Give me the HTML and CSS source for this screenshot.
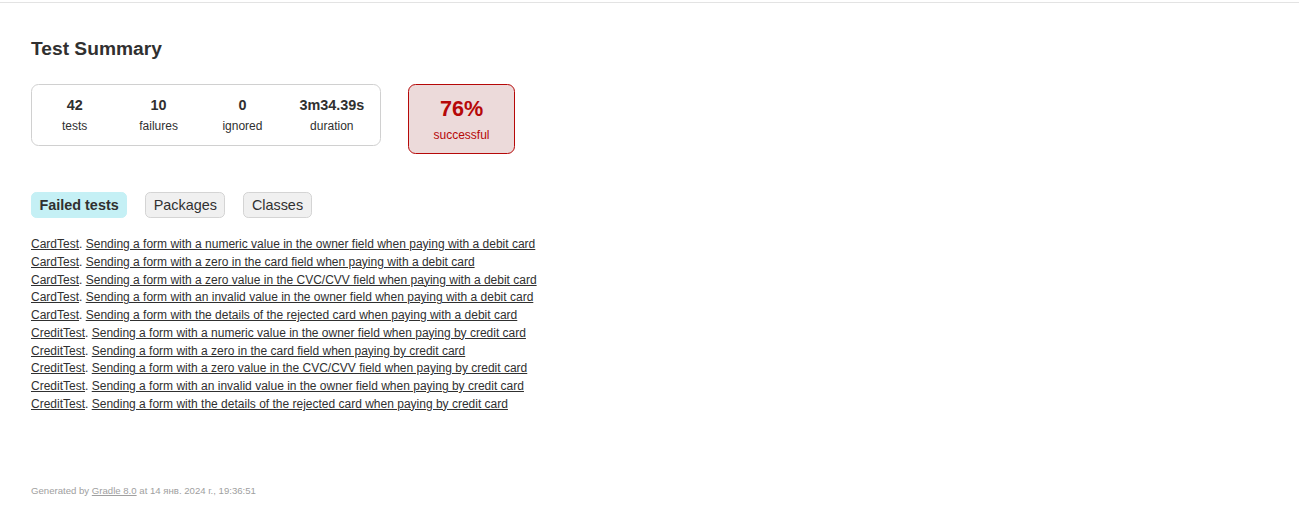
FILE: index.html
```html
<!DOCTYPE html>
<html>
<head>
<meta charset="utf-8">
<title>Test results - Test Summary</title>
<link rel="stylesheet" href="styles.css">
</head>
<body>
<div class="topline"></div>
<div class="content">
  <h1 class="title">Test Summary</h1>
  <div class="summary">
    <div class="summary-group">
      <div class="info-box">
        <div class="counter">42</div>
        <p class="label">tests</p>
      </div>
      <div class="info-box">
        <div class="counter">10</div>
        <p class="label">failures</p>
      </div>
      <div class="info-box">
        <div class="counter">0</div>
        <p class="label">ignored</p>
      </div>
      <div class="info-box info-duration">
        <div class="counter">3m34.39s</div>
        <p class="label">duration</p>
      </div>
    </div>
    <div class="success-rate">
      <div class="percent">76%</div>
      <p class="label">successful</p>
    </div>
  </div>
  <ul class="tab-links">
    <li class="tab selected"><a class="tab-link">Failed tests</a></li>
    <li class="tab"><a class="tab-link">Packages</a></li>
    <li class="tab"><a class="tab-link">Classes</a></li>
  </ul>
  <ul class="link-list">
    <li class="link-item"><a href="#">CardTest</a>. <a href="#">Sending a form with a numeric value in the owner field when paying with a debit card</a></li>
    <li class="link-item"><a href="#">CardTest</a>. <a href="#">Sending a form with a zero in the card field when paying with a debit card</a></li>
    <li class="link-item"><a href="#">CardTest</a>. <a href="#">Sending a form with a zero value in the CVC/CVV field when paying with a debit card</a></li>
    <li class="link-item"><a href="#">CardTest</a>. <a href="#">Sending a form with an invalid value in the owner field when paying with a debit card</a></li>
    <li class="link-item"><a href="#">CardTest</a>. <a href="#">Sending a form with the details of the rejected card when paying with a debit card</a></li>
    <li class="link-item"><a href="#">CreditTest</a>. <a href="#">Sending a form with a numeric value in the owner field when paying by credit card</a></li>
    <li class="link-item"><a href="#">CreditTest</a>. <a href="#">Sending a form with a zero in the card field when paying by credit card</a></li>
    <li class="link-item"><a href="#">CreditTest</a>. <a href="#">Sending a form with a zero value in the CVC/CVV field when paying by credit card</a></li>
    <li class="link-item"><a href="#">CreditTest</a>. <a href="#">Sending a form with an invalid value in the owner field when paying by credit card</a></li>
    <li class="link-item"><a href="#">CreditTest</a>. <a href="#">Sending a form with the details of the rejected card when paying by credit card</a></li>
  </ul>
  <div class="footer">
    <p class="footer-text">Generated by <a href="#">Gradle 8.0</a> at 14 янв. 2024 г., 19:36:51</p>
  </div>
</div>
</body>
</html>
```

FILE: styles.css
```css
html, body {
  margin: 0;
  padding: 0;
  background: #ffffff;
}

body {
  font-family: "Liberation Sans", Arial, sans-serif;
  font-size: 12px;
  color: #303030;
}

a, a:visited {
  color: #303030;
}

.topline {
  height: 2px;
  border-bottom: 1px solid #e3e3e3;
}

.content {
  padding: 0 31px;
}

.title {
  margin: 35px 0 0;
  font-size: 19.2px;
  line-height: 22px;
  font-weight: bold;
  color: #303030;
}

.summary {
  display: flex;
  align-items: flex-start;
  margin-top: 24px;
}

.summary-group {
  display: flex;
  width: 350px;
  height: 62px;
  box-sizing: border-box;
  border: 1.5px solid #d0d0d0;
  border-radius: 7.5px;
  padding: 0 0.75px;
}

.info-box {
  width: 84px;
  box-sizing: border-box;
  padding-top: 12px;
  text-align: center;
}

.info-box.info-duration {
  width: 95px;
}

.counter {
  font-size: 14.4px;
  line-height: 16px;
  font-weight: bold;
  margin-bottom: 6px;
}

.label {
  margin: 0;
  line-height: 14px;
}

.success-rate {
  width: 107px;
  height: 70px;
  box-sizing: border-box;
  margin-left: 27px;
  padding-top: 11px;
  border: 1.5px solid #b60808;
  border-radius: 7.5px;
  background: #ecdada;
  color: #b60808;
  text-align: center;
}

.percent {
  font-size: 21.6px;
  line-height: 25px;
  font-weight: bold;
  margin-bottom: 7px;
}

.tab-links {
  display: flex;
  list-style: none;
  margin: 38px 0 0;
  padding: 0;
}

.tab {
  padding: 3.75px 7.5px;
  margin-right: 18px;
  border: 0.75px solid #d4d4d4;
  border-radius: 5.25px;
  background: #f0f0f0;
  font-size: 14.4px;
  line-height: 16.5px;
}

.tab.selected {
  background: #c5f0f5;
  border-color: #c5f0f5;
}

.tab.selected .tab-link {
  font-weight: bold;
}

.tab-link {
  color: #303030;
  text-decoration: none;
}

.link-list {
  list-style: none;
  margin: 19px 0 0;
  padding: 0;
}

.link-item {
  line-height: 14px;
  margin-bottom: 3.78px;
}

.footer {
  margin-top: 74px;
}

.footer-text {
  margin: 0;
  font-size: 9.6px;
  line-height: 11px;
  color: #a0a0a0;
  white-space: nowrap;
}

.footer-text a {
  color: #a0a0a0;
}
```
